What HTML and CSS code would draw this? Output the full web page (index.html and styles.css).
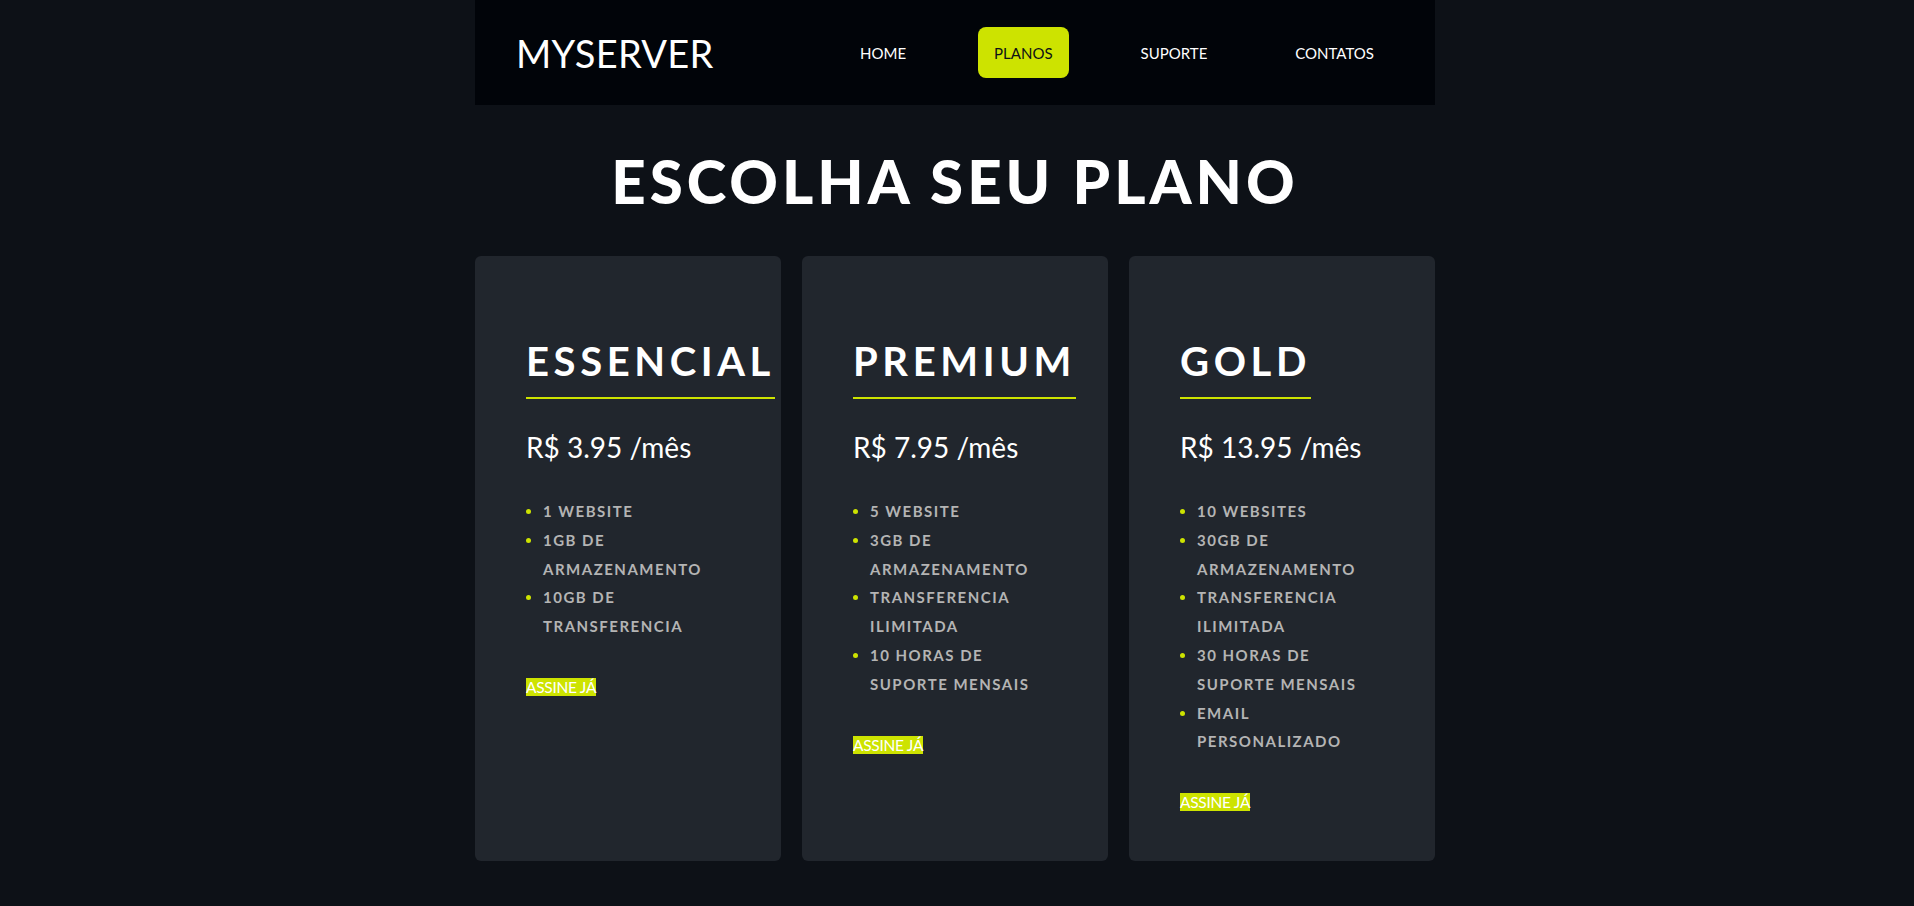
FILE: index.html
```html
<!DOCTYPE html>
<html lang="pt-BR">
<head>
<meta charset="utf-8">
<title>MyServer - Planos</title>
<link rel="stylesheet" href="styles.css">
</head>
<body>
<div class="page">
  <header class="topbar">
    <div class="logo">MYSERVER</div>
    <nav class="nav">
      <a class="nav-item" href="#">HOME</a>
      <a class="nav-item active" href="#">PLANOS</a>
      <a class="nav-item" href="#">SUPORTE</a>
      <a class="nav-item" href="#">CONTATOS</a>
    </nav>
  </header>

  <main>
    <h1 class="title">ESCOLHA SEU PLANO</h1>
    <section class="plans">
      <article class="card">
        <h2 class="plan-name">ESSENCIAL</h2>
        <p class="price">R$ 3.95 /mês</p>
        <ul class="features">
          <li>1 WEBSITE</li>
          <li>1GB DE ARMAZENAMENTO</li>
          <li>10GB DE TRANSFERENCIA</li>
        </ul>
        <div class="cta"><a class="buy" href="#">ASSINE JÁ</a></div>
      </article>
      <article class="card">
        <h2 class="plan-name">PREMIUM</h2>
        <p class="price">R$ 7.95 /mês</p>
        <ul class="features">
          <li>5 WEBSITE</li>
          <li>3GB DE ARMAZENAMENTO</li>
          <li>TRANSFERENCIA ILIMITADA</li>
          <li>10 HORAS DE SUPORTE MENSAIS</li>
        </ul>
        <div class="cta"><a class="buy" href="#">ASSINE JÁ</a></div>
      </article>
      <article class="card">
        <h2 class="plan-name">GOLD</h2>
        <p class="price">R$ 13.95 /mês</p>
        <ul class="features">
          <li>10 WEBSITES</li>
          <li>30GB DE ARMAZENAMENTO</li>
          <li>TRANSFERENCIA ILIMITADA</li>
          <li>30 HORAS DE SUPORTE MENSAIS</li>
          <li>EMAIL PERSONALIZADO</li>
        </ul>
        <div class="cta"><a class="buy" href="#">ASSINE JÁ</a></div>
      </article>
    </section>
  </main>
</div>
</body>
</html>
```

FILE: styles.css
```css
* { box-sizing: border-box; }

html, body {
  margin: 0;
  padding: 0;
  background: #0d1117;
  font-family: Lato, "Open Sans", "Noto Sans", sans-serif;
  color: #ffffff;
}

.page {
  width: 960px;
  margin: 0 auto;
  position: relative;
  left: -2px;
}

.topbar {
  height: 105px;
  background: #010409;
  display: flex;
  align-items: center;
  justify-content: space-between;
  padding: 0 45px 0 41px;
}

.logo {
  font-size: 38px;
  font-weight: 400;
  letter-spacing: 0.3px;
  color: #ffffff;
  line-height: 1;
}

.nav {
  display: flex;
  align-items: center;
  gap: 56px;
}

.nav-item {
  display: flex;
  align-items: center;
  height: 51px;
  padding: 0 16px;
  color: #ffffff;
  text-decoration: none;
  font-size: 15px;
  border-radius: 8px;
}

.nav-item.active {
  background: #cde300;
  color: #0d1117;
}

.title {
  margin: 40px 0 39px;
  text-align: center;
  font-size: 60px;
  font-weight: 900;
  line-height: 72px;
  letter-spacing: 4px;
}

.plans {
  display: grid;
  grid-template-columns: repeat(3, minmax(0, 1fr));
  gap: 21px;
}

.card {
  background: #21262d;
  border-radius: 6px;
  padding: 81px 40px 49px 51px;
}

.plan-name {
  display: inline-block;
  margin: 0;
  font-size: 40px;
  font-weight: 700;
  line-height: 48px;
  letter-spacing: 4.6px;
  padding-bottom: 12px;
  border-bottom: 2px solid #cde300;
  white-space: nowrap;
}

.price {
  margin: 31px 0 0;
  font-size: 28px;
  font-weight: 400;
  line-height: 35px;
}

.features {
  margin: 32px 0 0;
  padding: 0 20px 0 17px;
  list-style: disc;
}

.features li {
  font-size: 15px;
  font-weight: 700;
  line-height: 28.8px;
  letter-spacing: 1.5px;
  color: #b4b4b4;
}

.features li::marker {
  color: #cde300;
}

.cta {
  margin-top: 37px;
  font-size: 15.5px;
  line-height: 19px;
}

.buy {
  background: #cde300;
  color: #ffffff;
  text-decoration: none;
  letter-spacing: -0.3px;
}
```
